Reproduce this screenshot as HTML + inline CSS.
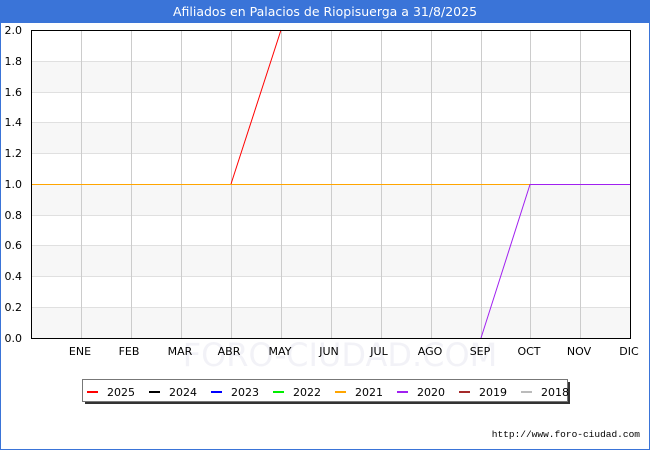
<!DOCTYPE html>
<html><head><style>body{margin:0;background:#fff}svg{display:block;font-family:"DejaVu Sans","Liberation Sans",sans-serif}</style></head><body>
<svg width="650" height="450" viewBox="0 0 650 450">
<rect x="0.5" y="0.5" width="649" height="449" fill="#fff" stroke="#3a74d8"/>
<rect x="0" y="0" width="650" height="23" fill="#3a74d8"/>
<text x="325" y="16" fill="#fff" font-size="12.5" text-anchor="middle">Afiliados en Palacios de Riopisuerga a 31/8/2025</text>
<g fill="#f7f7f7">
<rect x="31" y="61" width="599" height="31"/><rect x="31" y="122" width="599" height="31"/><rect x="31" y="184" width="599" height="31"/><rect x="31" y="245" width="599" height="31"/><rect x="31" y="307" width="599" height="31"/>
</g>
<g stroke="#e0e0e0"><path d="M31 61.5H630M31 92.5H630M31 122.5H630M31 153.5H630M31 215.5H630M31 245.5H630M31 276.5H630M31 307.5H630"/></g>
<g stroke="#cccccc"><path d="M81.5 30V338M131.5 30V338M181.5 30V338M231.5 30V338M281.5 30V338M331.5 30V338M381.5 30V338M431.5 30V338M481.5 30V338M530.5 30V338M580.5 30V338"/></g>
<text x="340" y="366" font-size="32" fill="#f0f0f6" text-anchor="middle" opacity="0.8">FORO-CIUDAD.COM</text>
<path d="M31 184.5H530" stroke="#ffa500"/>
<path d="M231 184L281 30" stroke="#ff0000" fill="none"/>
<path d="M481 338L530 184.5H630" stroke="#a020f0" fill="none"/>
<rect x="31.5" y="30.5" width="599" height="308" fill="none" stroke="#000"/>
<g font-size="11" text-anchor="end" fill="#000">
<text x="22" y="34">2.0</text><text x="22" y="65">1.8</text><text x="22" y="96">1.6</text><text x="22" y="126">1.4</text><text x="22" y="157">1.2</text><text x="22" y="188">1.0</text><text x="22" y="219">0.8</text><text x="22" y="249">0.6</text><text x="22" y="280">0.4</text><text x="22" y="311">0.2</text><text x="22" y="342">0.0</text>
</g>
<g font-size="11" text-anchor="middle">
<text x="80" y="355">ENE</text><text x="129" y="355">FEB</text><text x="180" y="355">MAR</text><text x="229" y="355">ABR</text><text x="280" y="355">MAY</text><text x="329" y="355">JUN</text><text x="379" y="355">JUL</text><text x="430" y="355">AGO</text><text x="480" y="355">SEP</text><text x="529" y="355">OCT</text><text x="579" y="355">NOV</text><text x="629" y="355">DIC</text>
</g>
<rect x="85" y="382" width="485" height="22" fill="#333"/>
<rect x="82.5" y="379.5" width="485" height="22" fill="#fff" stroke="#777"/>
<g stroke-width="2">
<path d="M87 392h11" stroke="#f00"/><path d="M149 392h11" stroke="#000"/><path d="M211 392h11" stroke="#00f"/><path d="M273 392h11" stroke="#0e0"/><path d="M335 392h11" stroke="#ffa500"/><path d="M397 392h11" stroke="#a020f0"/><path d="M459 392h11" stroke="#a52a2a"/><path d="M521 392h11" stroke="#bbb"/>
</g>
<g font-size="11">
<text x="107" y="396">2025</text><text x="169" y="396">2024</text><text x="231" y="396">2023</text><text x="293" y="396">2022</text><text x="355" y="396">2021</text><text x="417" y="396">2020</text><text x="479" y="396">2019</text><text x="541" y="396">2018</text>
</g>
<text x="640" y="437" font-size="9.5" text-anchor="end" font-family="Liberation Mono,monospace">http://www.foro-ciudad.com</text>
</svg>
</body></html>
